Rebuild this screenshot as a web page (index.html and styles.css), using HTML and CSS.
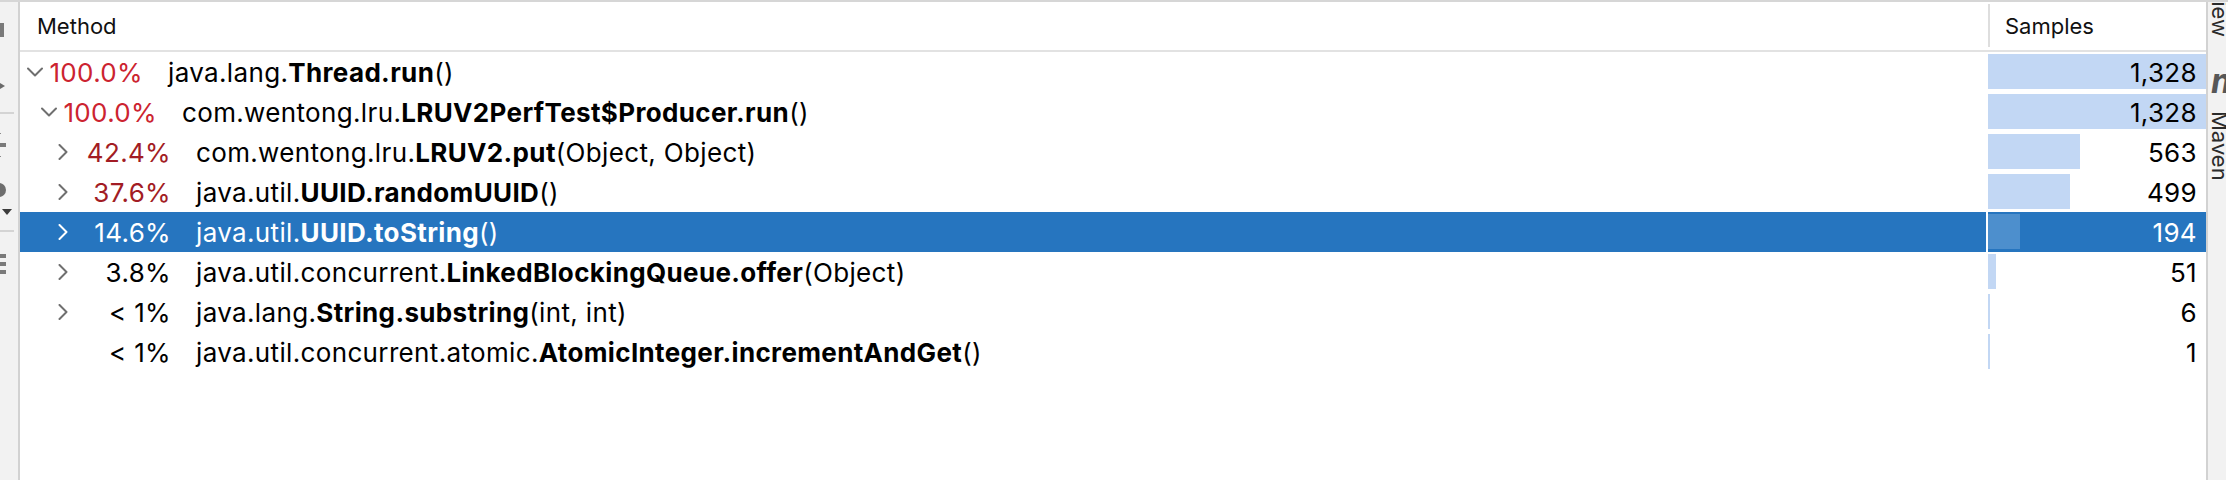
FILE: index.html
```html
<!DOCTYPE html>
<html>
<head>
<meta charset="utf-8">
<link rel="stylesheet" href="styles.css">
</head>
<body>
<div class="app">
  <aside class="stripe-left">
    <svg class="stripe-icons" width="18" height="478" viewBox="0 0 18 478">
      <rect x="0" y="21" width="4" height="14" fill="#7a7a7a"/>
      <polygon points="0,81 5,84 0,87" fill="#6a6a6a"/>
      <rect x="0" y="110" width="14" height="2" fill="#d4d4d4"/>
      <rect x="0" y="131" width="1" height="1" fill="#8a8a8a"/>
      <rect x="0" y="141" width="6" height="4" fill="#7a7a7a"/>
      <rect x="0" y="154" width="1" height="1" fill="#8a8a8a"/>
      <circle cx="-1" cy="188" r="7" fill="#6e6e6e"/>
      <polygon points="2,207 12,207 7,213" fill="#3c3c3c"/>
      <rect x="0" y="228" width="14" height="2" fill="#d4d4d4"/>
      <rect x="0" y="252" width="6" height="4" fill="#7a7a7a"/>
      <rect x="0" y="260" width="6" height="4" fill="#7a7a7a"/>
      <rect x="0" y="268" width="6" height="4" fill="#7a7a7a"/>
    </svg>
  </aside>

  <main class="table">
    <div class="header">
      <div class="h-method">Method</div>
      <div class="h-sep"></div>
      <div class="h-samples">Samples</div>
    </div>

    <div class="rows">
      <div class="row">
        <div class="c-method d0">
          <span class="chev"><svg width="16" height="16" viewBox="0 0 16 16"><path d="M1 4.5 L8 11.5 L15 4.5" class="chev-path"/></svg></span>
          <span class="pct hot">100.0%</span>
          <span class="name">java.lang.<b>Thread.run</b>()</span>
        </div>
        <div class="c-samples"><div class="bar" style="width:218px"></div><span class="num">1,328</span></div>
      </div>

      <div class="row">
        <div class="c-method d1">
          <span class="chev"><svg width="16" height="16" viewBox="0 0 16 16"><path d="M1 4.5 L8 11.5 L15 4.5" class="chev-path"/></svg></span>
          <span class="pct hot">100.0%</span>
          <span class="name">com.wentong.lru.<b>LRUV2PerfTest$Producer.run</b>()</span>
        </div>
        <div class="c-samples"><div class="bar" style="width:218px"></div><span class="num">1,328</span></div>
      </div>

      <div class="row">
        <div class="c-method d2">
          <span class="chev"><svg width="16" height="16" viewBox="0 0 16 16"><path d="M4.5 1 L11.5 8 L4.5 15" class="chev-path"/></svg></span>
          <span class="pct warm">42.4%</span>
          <span class="name">com.wentong.lru.<b>LRUV2.put</b>(Object, Object)</span>
        </div>
        <div class="c-samples"><div class="bar" style="width:92px"></div><span class="num">563</span></div>
      </div>

      <div class="row">
        <div class="c-method d2">
          <span class="chev"><svg width="16" height="16" viewBox="0 0 16 16"><path d="M4.5 1 L11.5 8 L4.5 15" class="chev-path"/></svg></span>
          <span class="pct warm">37.6%</span>
          <span class="name">java.util.<b>UUID.randomUUID</b>()</span>
        </div>
        <div class="c-samples"><div class="bar" style="width:82px"></div><span class="num">499</span></div>
      </div>

      <div class="row selected">
        <div class="c-method d2">
          <span class="chev"><svg width="16" height="16" viewBox="0 0 16 16"><path d="M4.5 1 L11.5 8 L4.5 15" class="chev-path"/></svg></span>
          <span class="pct">14.6%</span>
          <span class="name">java.util.<b>UUID.toString</b>()</span>
        </div>
        <div class="c-samples"><div class="bar" style="width:32px"></div><span class="num">194</span></div>
      </div>

      <div class="row">
        <div class="c-method d2">
          <span class="chev"><svg width="16" height="16" viewBox="0 0 16 16"><path d="M4.5 1 L11.5 8 L4.5 15" class="chev-path"/></svg></span>
          <span class="pct">3.8%</span>
          <span class="name">java.util.concurrent.<b>LinkedBlockingQueue.offer</b>(Object)</span>
        </div>
        <div class="c-samples"><div class="bar" style="width:8px"></div><span class="num">51</span></div>
      </div>

      <div class="row">
        <div class="c-method d2">
          <span class="chev"><svg width="16" height="16" viewBox="0 0 16 16"><path d="M4.5 1 L11.5 8 L4.5 15" class="chev-path"/></svg></span>
          <span class="pct">&lt; 1%</span>
          <span class="name">java.lang.<b>String.substring</b>(int, int)</span>
        </div>
        <div class="c-samples"><div class="bar" style="width:2px"></div><span class="num">6</span></div>
      </div>

      <div class="row">
        <div class="c-method d2">
          <span class="chev"></span>
          <span class="pct">&lt; 1%</span>
          <span class="name">java.util.concurrent.atomic.<b>AtomicInteger.incrementAndGet</b>()</span>
        </div>
        <div class="c-samples"><div class="bar" style="width:2px"></div><span class="num">1</span></div>
      </div>
    </div>
  </main>

  <aside class="stripe-right">
    <span class="vlabel vlabel-first">View</span>
    <span class="maven-icon">m</span>
    <span class="vlabel">Maven</span>
  </aside>
</div>
</body>
</html>
```

FILE: styles.css
```css
html, body {
  margin: 0;
  padding: 0;
  background: #ffffff;
  overflow: hidden;
}

body {
  font-family: Inter, "Liberation Sans", sans-serif;
  color: #000000;
}

.app {
  display: flex;
  height: 480px;
  box-sizing: border-box;
  border-top: 2px solid #d6d6d6;
}

.stripe-left {
  flex: none;
  width: 18px;
  background: #f2f2f2;
  border-right: 2px solid #d2d2d2;
  overflow: hidden;
}

.stripe-icons {
  display: block;
}

.table {
  flex: none;
  width: 2186px;
  display: flex;
  flex-direction: column;
  background: #ffffff;
}

.header {
  display: flex;
  align-items: center;
  height: 48px;
  border-bottom: 2px solid #e2e2e2;
  font-size: 22px;
  color: #111111;
}

.h-method {
  flex: none;
  width: 1968px;
  box-sizing: border-box;
  padding-left: 17px;
}

.h-sep {
  flex: none;
  width: 2px;
  align-self: stretch;
  margin: 2px 0 3px;
  background: #dedede;
}

.h-samples {
  padding-left: 15px;
}

.rows {
  display: flex;
  flex-direction: column;
}

.row {
  display: flex;
  height: 40px;
  font-size: 26px;
  letter-spacing: 0.35px;
}

.c-method {
  flex: none;
  width: 1966px;
  margin-right: 2px;
  box-sizing: border-box;
  display: flex;
  align-items: center;
  white-space: nowrap;
  overflow: hidden;
}

.d0 { padding-left: 7px; }
.d1 { padding-left: 21px; }
.d2 { padding-left: 35px; }

.chev {
  flex: none;
  width: 16px;
  height: 16px;
  display: flex;
}

.chev-path {
  fill: none;
  stroke: #6f6f6f;
  stroke-width: 2;
  stroke-linecap: round;
  stroke-linejoin: round;
}

.pct {
  flex: none;
  width: 100px;
  text-align: right;
}

.pct.hot { color: #cc2330; }
.pct.warm { color: #a21c24; }

.name {
  margin-left: 25px;
}

.name b {
  font-weight: 700;
}

.c-samples {
  flex: none;
  width: 218px;
  display: grid;
}

.bar, .num {
  grid-area: 1 / 1;
}

.bar {
  justify-self: start;
  align-self: start;
  height: 35px;
  margin-top: 2px;
  background: #c2d7f4;
}

.num {
  justify-self: end;
  align-self: center;
  padding-right: 9px;
}

.row.selected .c-method,
.row.selected .c-samples {
  background: #2675bf;
  color: #ffffff;
}

.row.selected .chev-path {
  stroke: #ffffff;
}

.row.selected .bar {
  background: #4d8fcd;
}

.stripe-right {
  flex: none;
  width: 20px;
  box-sizing: border-box;
  padding-left: 1px;
  border-left: 2px solid #d2d2d2;
  background: #f2f2f2;
  overflow: hidden;
  display: flex;
  flex-direction: column;
  align-items: flex-start;
  font-size: 22px;
  color: #2b2b2b;
}

.vlabel {
  writing-mode: vertical-rl;
  line-height: 22px;
  width: 22px;
  flex: none;
}

.vlabel-first {
  margin-top: -16px;
}

.maven-icon {
  flex: none;
  margin-top: 30px;
  margin-left: 2px;
  font-size: 34px;
  line-height: 28px;
  font-weight: 700;
  font-style: italic;
  color: #575757;
}

.maven-icon + .vlabel {
  margin-top: 16px;
}
```
